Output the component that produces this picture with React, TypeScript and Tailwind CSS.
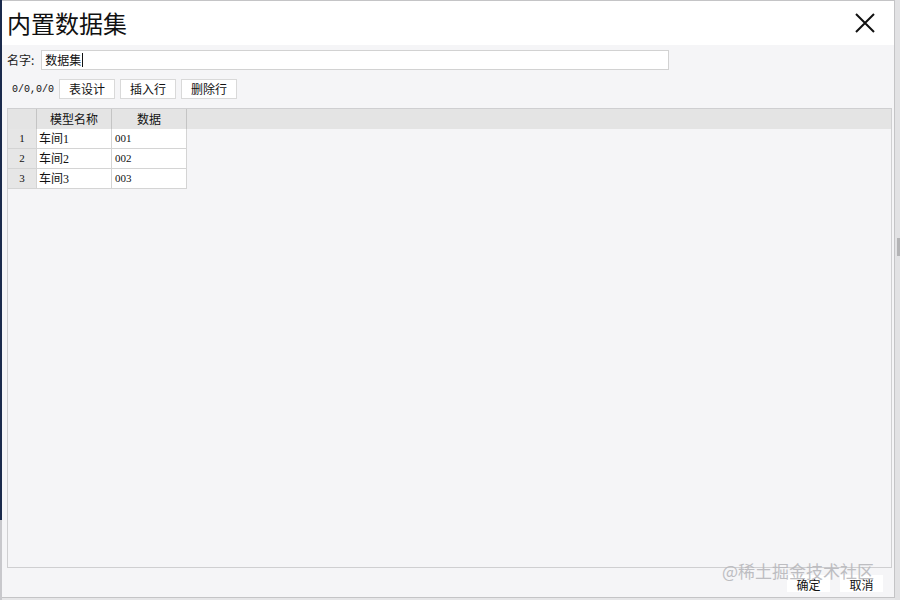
import React from "react";

const cjk = "font-['Microsoft_YaHei','Noto_Sans_CJK_SC',sans-serif]";
const cell = "font-['Liberation_Serif','Noto_Sans_CJK_SC',serif]";

const rows = [
  { no: 1, name: "车间1", data: "001" },
  { no: 2, name: "车间2", data: "002" },
  { no: 3, name: "车间3", data: "003" },
];

function ToolButton({ label }: { label: string }) {
  return (
    <button className="h-[20px] w-[56px] border border-[#d9d9d9] bg-white text-[12px] leading-none text-[#111]">
      {label}
    </button>
  );
}

export default function App() {
  return (
    <div className={`relative flex h-[600px] w-[900px] overflow-hidden bg-[#e6e6e8] ${cjk}`}>
      {/* desktop edge on the left */}
      <div className="flex w-[2px] flex-col">
        <div className="h-[520px] bg-[#1a2a4c]" />
        <div className="flex-1 bg-[#c8c8cc]" />
      </div>

      {/* dialog */}
      <div className="flex h-[598px] w-[893px] flex-col border-t border-r border-b border-[#c4c4c6] bg-[#f5f5f7]">
        {/* title bar */}
        <div className="flex h-[44px] items-center justify-between bg-white pl-[5px] pr-[18px]">
          <span className="text-[24px] leading-none text-[#111]">内置数据集</span>
          <svg width="22" height="22" viewBox="0 0 22 22" className="text-[#111]">
            <path d="M2 2 L20 20 M20 2 L2 20" stroke="currentColor" strokeWidth="2" fill="none" />
          </svg>
        </div>

        {/* name row */}
        <div className="flex items-center gap-[7px] pl-[5px] pt-[5px]">
          <span className="text-[12px] text-[#222]">名字:</span>
          <div className="flex h-[20px] w-[628px] items-center border border-[#d2d2d2] bg-white pl-[3px] text-[12px] text-[#111]">
            数据集
            <span className="ml-[1px] h-[14px] w-[1px] bg-[#111]" />
          </div>
        </div>

        {/* toolbar */}
        <div className="flex items-center gap-[5px] pl-[10px] pt-[9px]">
          <span className="font-['Liberation_Mono',monospace] text-[10px] text-[#111]">0/0,0/0</span>
          <ToolButton label="表设计" />
          <ToolButton label="插入行" />
          <ToolButton label="删除行" />
        </div>

        {/* grid */}
        <div className="ml-[5px] mr-[2px] mt-[9px] flex-1 border border-[#cfcfd1] bg-[#f5f5f7]">
          <div className="flex h-[20px] bg-[#e4e4e4] text-[12px] text-[#111]">
            <div className="w-[29px] border-r border-[#c4c4c4]" />
            <div className="flex w-[75px] items-center justify-center border-r border-[#c4c4c4]">模型名称</div>
            <div className="flex w-[75px] items-center justify-center border-r border-[#c4c4c4]">数据</div>
          </div>
          {rows.map((r) => (
            <div key={r.no} className={`flex h-[20px] text-[12px] text-[#111] ${cell}`}>
              <div className="flex w-[29px] items-center justify-center border-b border-r border-[#d4d4d4] bg-[#e6e6e6] text-[11px]">
                {r.no}
              </div>
              <div className="flex w-[75px] items-center border-b border-r border-[#d4d4d4] bg-white pl-[2px]">
                {r.name}
              </div>
              <div className="flex w-[75px] items-center border-b border-r border-[#d4d4d4] bg-white pl-[3px] text-[11px]">
                {r.data}
              </div>
            </div>
          ))}
        </div>

        {/* footer */}
        <div className="flex h-[29px] items-center justify-end gap-[10px] pr-[11px] pt-[2px]">
          <button className="h-[17px] w-[43px] bg-white pt-[2px] text-[12px] leading-none text-[#111]">确定</button>
          <button className="h-[17px] w-[43px] bg-white pt-[2px] text-[12px] leading-none text-[#111]">取消</button>
        </div>
      </div>

      {/* desktop edge on the right */}
      <div className="flex flex-1 flex-col bg-[#e2e2e4]">
        <div className="h-[238px]" />
        <div className="ml-[2px] h-[18px] w-[3px] bg-[#b4b4b6]" />
      </div>

      {/* watermark, it lies over the footer buttons as in the screenshot */}
      <div className="pointer-events-none absolute left-[722px] top-[562px] text-[17px] leading-none text-[#b8b8bc] opacity-90">
        @稀土掘金技术社区
      </div>
    </div>
  );
}
